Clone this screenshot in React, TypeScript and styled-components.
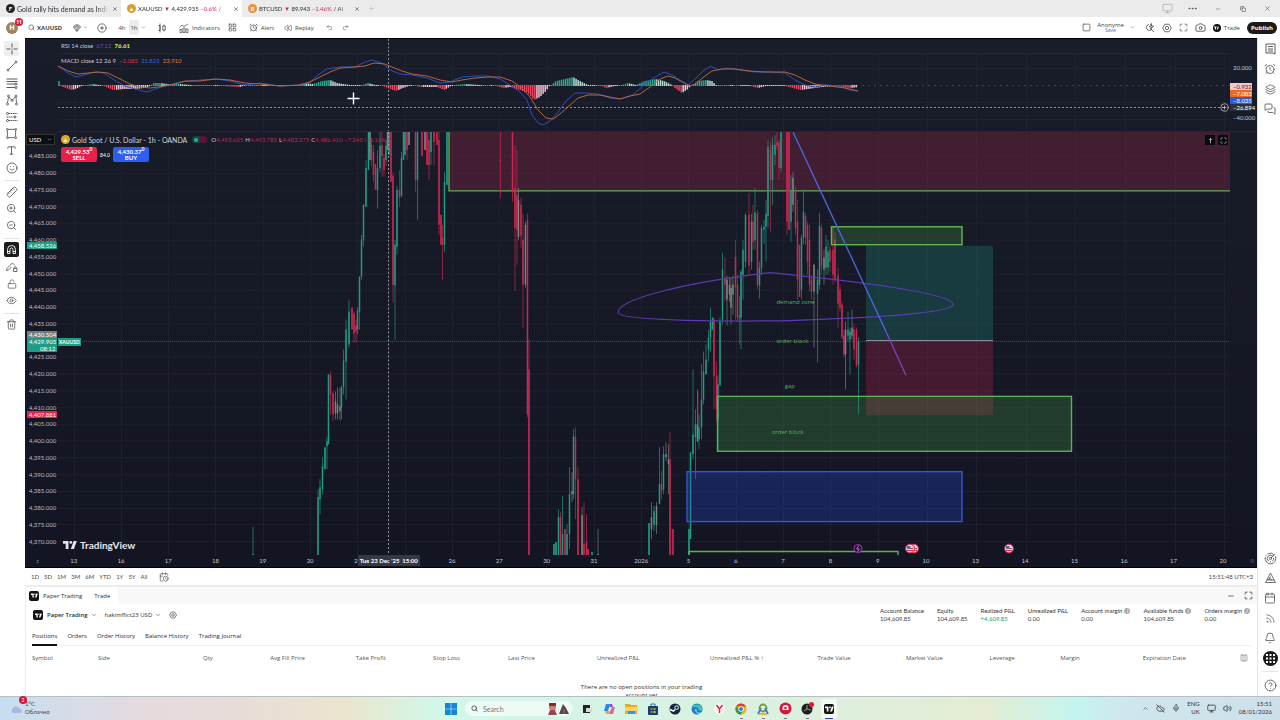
import React from 'react';
import styled, { createGlobalStyle } from 'styled-components';
import {
  AlarmClock, Bell, Calendar, Camera, ChevronDown, ChevronUp, CircleHelp, CirclePlus, CloudOff, Eye,
  Gem, LayoutGrid, Layers, LockOpen, Maximize, MessagesSquare, Mic, Minus, Monitor, Pencil,
  Radar, Redo2, Rewind, Rss, Ruler, Search, Smile, Square, Trash2, Type, Undo2, Volume2, X, ZoomIn, ZoomOut,
  CalendarClock, Columns3, Plus, Ellipsis, Copy,
} from 'lucide-react';

const GlobalStyle = createGlobalStyle`
  * { box-sizing: border-box; }
  body { margin: 0; background: #fff; font-family: Lato, "Liberation Sans", sans-serif; font-size: 6px; line-height: 8px; color: #2a2e39; }
  button, input, select { font: inherit; color: inherit; margin: 0; }
  svg { display: block; flex: none; }
`;

const UP = '#1f9c84';
const DOWN = '#cc2850';
const MIX = '#7d8580';
const WIDE_FACE = '"Open Sans", "Noto Sans", sans-serif';

/* ---------- shell ---------- */
const Shell = styled.div`
  display: flex;
  flex-direction: column;
  height: 100vh;
  overflow: hidden;
`;
const Main = styled.main`
  display: flex;
  flex: 1;
  min-height: 0;
`;
const Center = styled.div`
  display: flex;
  flex-direction: column;
  flex: 1;
  min-width: 0;
`;
const PlainButton = styled.button`
  display: flex;
  align-items: center;
  justify-content: center;
  gap: 3px;
  padding: 0;
  border: 0;
  background: none;
  white-space: nowrap;
`;
const Spacer = styled.div`
  flex: 1;
`;

/* ---------- window tabs ---------- */
const TabStrip = styled.header`
  display: flex;
  align-items: center;
  height: 17px;
  flex: none;
  background: #ebebeb;
`;
const WindowTab = styled.div<{ $active?: boolean; $large?: boolean }>`
  display: flex;
  align-items: center;
  gap: 2px;
  width: 121px;
  height: 17px;
  padding: 0 3px 0 6px;
  font-size: ${p => (p.$large ? 7 : 6)}px;
  background: ${p => (p.$active ? '#fff' : 'transparent')};
`;
const TabTitle = styled.span`
  flex: 1;
  overflow: hidden;
  white-space: nowrap;
  mask-image: linear-gradient(90deg, #000 85%, transparent);
`;
const Coin = styled.span<{ $color: string }>`
  display: flex;
  align-items: center;
  justify-content: center;
  flex: none;
  width: 9px;
  height: 9px;
  border-radius: 50%;
  background: ${p => p.$color};
  color: #fff;
  font-size: 6px;
  font-weight: 700;
`;
const Loss = styled.span`
  color: #d32e52;
`;
const WindowControls = styled.div`
  display: grid;
  grid-auto-flow: column;
  grid-auto-columns: 25px;
  align-items: center;
  justify-items: center;
  color: #555;
`;

/* ---------- toolbar ---------- */
const Toolbar = styled.nav`
  display: flex;
  align-items: center;
  height: 21px;
  flex: none;
  padding: 0 3px 0 6px;
  background: #fff;
  color: #444;
  font-family: ${WIDE_FACE};
  button { height: 15px; }
`;
const ToolGroup = styled.div<{ $gap: number; $left?: number }>`
  display: flex;
  align-items: center;
  gap: ${p => p.$gap}px;
  margin-left: ${p => p.$left ?? 0}px;
`;
const Avatar = styled.button`
  position: relative;
  width: 12px;
  border: 0;
  padding: 0;
  border-radius: 50%;
  background: #9c8465;
  color: #fff;
  font-weight: 700;
  && { height: 12px; font-size: 7px; }
`;
const Count = styled.span`
  position: absolute;
  top: -4px;
  right: -5px;
  width: 8px;
  height: 8px;
  border-radius: 4px;
  background: #d9163a;
  color: #fff;
  font-size: 5px;
  text-align: center;
`;
const Interval = styled(PlainButton)<{ $on?: boolean }>`
  width: 10px;
  border-radius: 2px;
  background: ${p => (p.$on ? '#ececec' : 'none')};
`;
const Layout = styled(PlainButton)`
  flex-direction: column;
  gap: 0;
  line-height: 6px;
  small { font-size: 5px; line-height: 5px; color: #5a5ae0; }
`;
const PublishButton = styled(PlainButton)`
  width: 30px;
  border-radius: 7px;
  background: #1b1b1b;
  color: #fff;
  font-weight: 700;
  && { height: 12px; }
`;
const Badge = styled.span`
  display: flex;
  align-items: center;
  justify-content: center;
  width: 8px;
  height: 8px;
  border-radius: 50%;
  background: #111;
  color: #fff;
`;

/* ---------- rails ---------- */
const LeftRail = styled.aside`
  display: flex;
  flex-direction: column;
  align-items: center;
  width: 25px;
  flex: none;
  padding: 3px 2px 0 0;
  color: #4a4a4a;
`;
const RailButton = styled(PlainButton)<{ $tone?: 'soft' | 'dark' }>`
  width: 15px;
  height: 15px;
  margin-bottom: 2px;
  border-radius: 2px;
  background: ${p => (p.$tone === 'dark' ? '#1c1c1c' : p.$tone === 'soft' ? '#ededed' : 'none')};
  color: ${p => (p.$tone === 'dark' ? '#fff' : 'inherit')};
`;
const RailRule = styled.hr`
  width: 16px;
  margin: 3px 0;
  border: 0;
  border-top: 1px solid #e6e6e6;
`;
const RightRail = styled.aside`
  display: flex;
  flex-direction: column;
  align-items: center;
  width: 23px;
  flex: none;
  padding: 1px 0 1px 2px;
  border-left: 1px solid #e4e4e4;
  color: #4a4a4a;
  button { width: 15px; height: 20px; }
`;
const AppsButton = styled(PlainButton)`
  && { height: 15px; margin: 3px 0 2px; }
  border-radius: 50%;
  background: #161616;
  color: #fff;
`;

/* ---------- chart ---------- */
const Chart = styled.section`
  display: grid;
  grid-template-columns: 33px 1fr 27px;
  grid-template-rows: 15px 78px 1fr 12px;
  flex: 1;
  min-height: 0;
  border-top: 1px solid #000;
  border-bottom: 1px solid #000;
  background: linear-gradient(#191c29, #131622);
  color: #c8cad2;
`;
const Pane = styled.div`
  position: relative;
  min-width: 0;
  min-height: 0;
  > svg { position: absolute; width: 100%; height: 100%; }
`;
const IndicatorPane = styled(Pane)`
  border-bottom: 1px solid #242733;
`;
const EmptyAxis = styled.div``;
const Legend = styled.div`
  position: relative;
  display: flex;
  gap: 3px;
  padding: 3px;
  white-space: nowrap;
`;
const Value = styled.span<{ $color: string; $bold?: boolean }>`
  color: ${p => p.$color};
  font-weight: ${p => (p.$bold ? 700 : 400)};
`;
const PriceAxis = styled.div`
  position: relative;
  display: flex;
  flex-direction: column;
  padding: 16px 0 5px;
  color: #b9bcc6;
`;
const PriceTick = styled.span`
  display: flex;
  flex: 1;
  align-items: center;
  padding-left: 4px;
`;
const AxisTag = styled.span<{ $top: number; $color: string }>`
  position: absolute;
  top: ${p => p.$top}%;
  left: 2px;
  width: 30px;
  padding-left: 2px;
  background: ${p => p.$color};
  color: #fff;
  line-height: 7px;
  span { display: block; padding-left: 11px; }
`;
const CurrencyBox = styled.div`
  position: absolute;
  top: 2px;
  left: 1px;
  display: flex;
  align-items: center;
  width: 29px;
  height: 11px;
  padding: 0 2px;
  border: 1px solid #333;
  background: #0c0e15;
  color: #fff;
`;
const CurrencySelect = styled.select`
  appearance: none;
  flex: 1;
  min-width: 0;
  padding: 0;
  border: 0;
  background: none;
  line-height: 8px;
`;
const SymbolTag = styled.span`
  position: absolute;
  top: 48.6%;
  left: 0;
  padding: 0 1px;
  background: ${UP};
  color: #fff;
  font-size: 5px;
  font-weight: 700;
`;
const SymbolRow = styled.div`
  position: relative;
  display: flex;
  align-items: center;
  gap: 2px;
  padding: 3px 3px 0;
  white-space: nowrap;
`;
const SymbolName = styled.span`
  margin-right: 3px;
  font-size: 7px;
  color: #d3d5dc;
`;
const Status = styled.span`
  width: 15px;
  height: 7px;
  margin-right: 2px;
  border-radius: 4px;
  background: linear-gradient(90deg, #12453f 50%, #5b1235 50%);
  &::before { content: ''; display: block; width: 4px; height: 4px; margin: 2px; border-radius: 50%; background: #1fb59a; }
`;
const OrderRow = styled.div`
  position: relative;
  display: flex;
  align-items: center;
  gap: 2px;
  padding: 3px 3px;
  color: #fff;
`;
const OrderButton = styled.button<{ $color: string }>`
  width: 36px;
  height: 15px;
  padding: 0;
  border: 0;
  border-radius: 2px;
  background: ${p => p.$color};
  color: #fff;
  font-weight: 700;
  line-height: 6px;
  sup { font-size: 5px; line-height: 0; }
`;
const Spread = styled.span`
  width: 12px;
  text-align: center;
  font-size: 5px;
`;
const Note = styled.span<{ $x: number; $y: number }>`
  position: absolute;
  left: ${p => p.$x}%;
  top: ${p => p.$y}%;
  margin-top: -4px;
  color: #58b05c;
  font-family: ${WIDE_FACE};
  white-space: nowrap;
`;
const Watermark = styled.div`
  position: absolute;
  left: 5px;
  bottom: 4px;
  display: flex;
  align-items: center;
  gap: 3px;
  color: #e4e5ea;
  font-size: 10px;
  line-height: 12px;
  font-weight: 700;
`;
const PaneButtons = styled.div`
  position: absolute;
  top: 3px;
  right: 2px;
  display: flex;
  gap: 3px;
  button { width: 10px; height: 10px; background: #08090e; color: #ddd; }
`;
const TimeAxis = styled.div`
  position: relative;
  grid-column: 1 / -1;
  display: flex;
  align-items: center;
  color: #c3c6cf;
`;
const TimeTick = styled.span<{ $grow: number }>`
  flex: ${p => p.$grow} 1 0;
  text-align: center;
`;
const AxisEnd = styled.span<{ $width: number }>`
  display: flex;
  justify-content: center;
  width: ${p => p.$width}px;
  color: #777b88;
`;
const TimeTag = styled.span`
  position: absolute;
  left: 27%;
  top: 0;
  height: 11px;
  padding: 2px;
  background: #343845;
  color: #fff;
  font-weight: 700;
  white-space: nowrap;
`;
const MacdAxis = styled.div`
  position: relative;
  display: flex;
  flex-direction: column;
  padding-top: 10px;
  border-bottom: 1px solid #242733;
`;
const MacdTick = styled.span`
  padding-left: 3px;
`;
const MacdTag = styled.span<{ $color: string; $ink?: string }>`
  width: 22px;
  padding-left: 3px;
  background: ${p => p.$color};
  color: ${p => p.$ink ?? '#fff'};
  line-height: 7px;
`;
const MacdTags = styled.div`
  display: flex;
  flex-direction: column;
  padding: 11px 0 3px;
`;
const AddAlert = styled(PlainButton)`
  position: absolute;
  right: 1px;
  top: 49px;
  color: #ccc;
`;

/* ---------- bottom area ---------- */
const RangeBar = styled.div`
  display: flex;
  align-items: center;
  gap: 5px;
  height: 17px;
  flex: none;
  padding: 0 4px 0 6px;
  color: #4d4d4d;
`;
const DateButton = styled(PlainButton)`
  margin-left: 6px;
`;
const PanelTabs = styled.div`
  display: flex;
  align-items: center;
  height: 19px;
  flex: none;
  border-top: 2px solid #ececec;
  background: #f8f8f8;
  padding-right: 4px;
  gap: 9px;
`;
const PanelTab = styled.div`
  display: flex;
  align-items: center;
  gap: 4px;
  width: 92px;
  height: 17px;
  padding-left: 3px;
  background: #fff;
  button + button { margin-left: 8px; }
`;
const LogoTile = styled.span`
  display: flex;
  align-items: center;
  justify-content: center;
  width: 10px;
  height: 10px;
  border-radius: 2px;
  background: #141414;
  color: #fff;
`;
const AccountRow = styled.div`
  display: flex;
  align-items: center;
  gap: 4px;
  height: 22px;
  flex: none;
  padding: 0 7px;
  b { font-weight: 600; }
`;
const AccountButton = styled(PlainButton)`
  margin-right: 4px;
`;
const Stats = styled.dl`
  display: flex;
  gap: 13px;
  margin: 0;
  font-family: Lato, sans-serif;
  div { white-space: nowrap; }
  dt { display: flex; align-items: center; gap: 2px; color: #333; }
  dd { margin: 0; }
`;
const Info = styled.i`
  width: 6px;
  height: 6px;
  border-radius: 50%;
  background: #aaa;
  color: #fff;
  font-size: 5px;
  line-height: 6px;
  text-align: center;
`;
const SubTabs = styled.div`
  display: flex;
  gap: 10px;
  height: 20px;
  flex: none;
  margin: 0 6px;
  border-bottom: 1px solid #eee;
`;
const SubTab = styled(PlainButton)<{ $on?: boolean }>`
  height: 20px;
  padding-top: 2px;
  border-bottom: ${p => (p.$on ? '2px solid #111' : '2px solid transparent')};
`;
const Positions = styled.table`
  width: calc(100% - 12px);
  margin: 0 6px;
  table-layout: fixed;
  border-collapse: collapse;
  th { height: 23px; padding: 0; font-weight: 400; text-align: right; color: #555; white-space: nowrap; }
  th:nth-child(-n+2) { text-align: left; }
  td { padding: 14px 0 0; text-align: center; color: #333; }
  th svg { margin: 0 3px 0 auto; }
`;
const EmptyText = styled.p`
  width: 132px;
  margin: 0 auto;
`;
const BottomPanel = styled.section`
  flex: none;
  height: 111px;
  overflow: hidden;
  border-left: 1px solid #eee;
  font-family: ${WIDE_FACE};
`;

/* ---------- taskbar ---------- */
const Taskbar = styled.footer`
  position: relative;
  display: flex;
  align-items: center;
  justify-content: center;
  height: 24px;
  flex: none;
  border-top: 1px solid #b4c0c4;
  background: linear-gradient(90deg, #c6def0 0, #d8dce6 6%, #e7dadd 12%, #e7dcd9 18%, #ebe5cd 27%, #d2f7e8 34%, #d6f3e4 48%, #deefdd 66%, #e5ecd3 77%, #c4f5ef 84%, #cfe6ee 88%, #cde0ea 100%);
`;
const Weather = styled.div`
  position: absolute;
  left: 10px;
  top: 3px;
  display: flex;
  gap: 3px;
  color: #444;
`;
const WeatherIcon = styled.span`
  position: relative;
  padding-top: 4px;
`;
const Apps = styled.div`
  display: flex;
  align-items: center;
  gap: 6px;
`;
const AppButton = styled.button<{ $open?: boolean; $on?: boolean }>`
  position: relative;
  display: flex;
  align-items: center;
  justify-content: center;
  width: 16px;
  height: 20px;
  padding: 0;
  border: 0;
  border-radius: 2px;
  background: ${p => (p.$on ? '#f3faf4' : 'none')};
  &::after {
    content: '';
    position: absolute;
    bottom: 0;
    width: ${p => (p.$on ? 8 : 3)}px;
    height: 1px;
    background: ${p => (p.$on ? '#3146b5' : p.$open ? '#778' : 'transparent')};
  }
`;
const SearchBox = styled.label`
  display: flex;
  align-items: center;
  gap: 5px;
  width: 108px;
  height: 15px;
  padding: 0 3px 0 6px;
  border-radius: 8px;
  background: #eefaf4;
  font-size: 7px;
  input { flex: 1; min-width: 0; border: 0; padding: 0; background: none; outline: none; }
`;
const Tray = styled.div`
  position: absolute;
  right: 8px;
  top: 3px;
  display: flex;
  align-items: center;
  gap: 7px;
  color: #333;
  text-align: right;
`;

/* ---------- chart data ---------- */
type Candle = [number, number, number, number, number, string];
const u = (x: number, h: number, l: number, a = h, b = l): Candle => [x, h, l, a, b, UP];
const d = (x: number, h: number, l: number, a = h, b = l): Candle => [x, h, l, a, b, DOWN];
const m = (x: number, h: number, l: number, a = h, b = l): Candle => [x, h, l, a, b, MIX];

const candles: Candle[] = [
  u(253, 528, 556, 555, 556),
  u(318, 490, 556, 498), u(320, 480, 515, 488, 500), u(322.5, 458, 495, 467, 490), u(325, 448, 470), u(327, 438, 470, 442, 447),
  u(328.5, 375, 445), d(330.5, 372, 415, 376, 395), d(333, 392, 422, 394, 415), m(335.5, 392, 420, 402, 414), m(337.5, 388, 420, 405, 414),
  m(340, 388, 421, 407, 412), u(341.5, 386, 420, 388, 408), u(343.5, 350, 395, 361, 388), u(346, 320, 400, 330, 362), u(349, 300, 348, 312, 345),
  d(352, 308, 330), d(354, 312, 343, 314, 334), d(356, 320, 343, 326, 332), u(357.5, 308, 335, 311, 330), u(359.5, 277, 330, 277, 312),
  u(361.5, 235, 280, 240, 277), u(363.5, 204, 247, 205, 240), u(366, 160, 207, 168), u(368.5, 132, 170), m(370, 132, 160), d(371.5, 138, 166, 145, 160),
  d(373.5, 145, 182, 152, 175), d(375.5, 164, 190), u(377.5, 150, 209, 168, 190), u(380, 132, 172, 146, 168), d(382, 132, 177, 145, 156), d(384, 154, 177, 158, 170),
  u(386, 140, 166, 146, 160), u(389, 132, 155), m(387.5, 132, 150), d(391, 132, 182), d(393, 172, 303, 176, 285), u(395, 240, 340, 245, 286), u(397, 186, 255, 190, 247),
  d(399.5, 170, 207, 190, 198), u(401.5, 152, 197, 158, 196), u(403.5, 132, 160), u(405, 132, 155), d(407, 132, 160, 132, 150), m(409, 132, 145),
  d(415.5, 132, 192, 132, 180), u(417.5, 132, 220, 132, 180), d(422, 132, 156), m(425, 132, 150), d(427, 132, 165), d(429, 132, 180, 140, 165), u(431, 132, 165, 132, 152),
  d(434, 132, 165, 132, 142), d(437, 132, 145), d(439, 132, 235, 140, 225), d(441, 215, 245), d(442.5, 225, 280, 238, 245), u(444.5, 172, 252, 182, 245), u(447, 132, 185),
  d(500.5, 132, 199, 160, 161), d(512.5, 132, 202, 132, 192), d(515, 145, 291, 188, 228), d(517, 150, 265, 195, 230), m(518.5, 188, 240, 200, 237), d(521, 198, 248, 205, 236),
  d(523, 214, 328, 240, 285), m(525.5, 222, 288, 225, 285), d(527.5, 214, 418, 220, 415), d(529, 340, 556, 370),
  u(554, 545, 556), u(556, 543, 556), u(558.5, 510, 556, 518), d(560.5, 513, 556, 518), u(562.5, 497, 556, 535), d(565, 530, 556), u(567, 525, 556, 535), u(569.5, 468, 550, 495, 535),
  m(572, 473, 503, 492, 495), u(573.5, 430, 500, 437, 495), d(575.5, 428, 520, 438, 480), d(578, 468, 556, 480), m(582, 508, 556, 516), d(584, 503, 556, 545), d(586.5, 515, 556, 543), d(588, 550, 556),
  u(592, 553, 556), m(598, 530, 556, 555),
  u(649, 524, 556), m(651.5, 503, 540, 518, 530), u(654, 507, 532, 512, 526), m(656.5, 503, 535, 507, 526), u(659.5, 448, 505, 485), d(661.5, 472, 500, 485, 492), u(663.5, 447, 495, 455, 490),
  m(666, 443, 462, 455, 458), m(668.5, 445, 495, 460, 465), d(670, 433, 556, 460), d(673, 530, 556),
  u(689, 530, 556), u(690.5, 453, 540), u(693, 370, 460, 435, 455), u(695.5, 410, 480, 425, 438), m(697.5, 390, 443, 425, 442), d(698, 392, 425, 424, 425), u(699, 415, 450, 428, 440), u(701.5, 365, 440, 400, 428),
  u(703.5, 352, 405, 372, 400), u(706, 345, 375, 360), u(708.5, 330, 362, 338, 350), u(710.5, 308, 352, 322, 338), u(712.5, 318, 330), d(714, 318, 410, 320, 377), d(716.5, 362, 422, 377, 410), u(718, 375, 452, 385, 420),
  u(720, 318, 386, 322), u(722.5, 253, 325, 270, 320), d(725, 258, 302, 278, 285), m(727, 276, 326, 280, 300), m(729.5, 277, 302, 285, 295), m(731, 278, 325, 288, 308), m(733, 276, 315, 285, 295),
  d(735.5, 240, 320, 257, 288), d(737.5, 275, 322, 285, 318), d(739.5, 296, 345, 316, 320), u(741, 270, 350, 272, 318), u(743, 240, 300, 250, 275), u(745.5, 213, 268, 215, 262), d(749, 193, 275, 215, 266), u(751.5, 214, 270, 222, 262),
  d(753, 205, 250, 222, 242), u(755, 188, 250, 213, 240), d(757.5, 210, 290, 213, 285), u(759.5, 262, 299, 268, 286), u(761.5, 225, 275, 228, 268), u(764, 220, 244, 227, 230), u(766, 200, 262, 214, 227), u(768, 140, 228, 147, 216),
  d(770.5, 142, 232, 150, 180), u(772.5, 138, 205, 145, 180), u(775, 135, 165, 145, 155), d(777, 132, 150, 142, 146), d(779, 140, 180, 143, 168), u(781, 132, 172, 132, 168), d(787, 132, 235, 132, 222), d(789, 132, 230),
  u(791, 175, 242, 190, 222), m(793, 172, 212, 178, 205), d(795.5, 186, 235, 192, 228), d(797.5, 200, 300, 222, 280), d(799.5, 245, 297), u(801.5, 235, 300, 238, 290), u(803.5, 190, 245, 212, 238), d(805.5, 213, 245, 216, 238),
  d(807.5, 222, 275, 225, 262), d(809.5, 225, 292, 240, 285), d(811.5, 276, 300, 280, 292), m(814, 264, 348, 265, 292), u(817.5, 270, 363, 280, 294), u(819.5, 213, 290, 226, 285), d(821.5, 224, 275, 228, 266), m(824, 250, 285, 258, 270),
  u(826, 235, 275, 247, 268), u(828, 240, 275, 252, 268), d(830, 246, 272, 250, 262), d(833, 226, 285, 250, 275), d(835, 232, 283, 240, 280), d(838, 268, 328, 276, 304), d(840, 285, 312, 290, 308), d(842, 302, 340, 305, 338),
  d(844, 330, 358, 336, 355), m(845.5, 322, 390, 330, 355), u(848, 312, 342, 330, 336), u(850, 328, 375, 332, 340), m(852, 310, 340, 328, 336), d(854, 324, 360, 330, 350), d(856.5, 328, 368, 330, 366), u(858.5, 338, 415, 342, 365),
];

const envelope: [number, number][] = [
  [59, 5], [61, 0], [63, -2], [72, -5], [78, -3], [82, 0], [92, 2], [99, 1], [104, -1], [113, -5], [125, -4], [135, -4], [145, -3], [150, -1], [153, 3], [160, 3],
  [168, 2], [180, 2], [190, 1], [215, 1], [222, -1], [240, -2], [248, 1], [262, 1], [275, -1], [290, -1], [297, 0], [303, 3], [313, 2], [322, 5], [330, 6], [337, 3],
  [350, 1], [360, 0], [368, 3], [375, 1], [383, -1], [390, -4], [396, -6], [403, -3], [412, 0], [420, -2], [437, -2], [444, -5], [451, -1], [454, 1], [465, 2],
  [480, 1], [490, 1], [497, -1], [503, -3], [510, -2], [520, -5], [528, -8], [534, -15], [540, -12], [546, -6], [550, 0], [556, 5], [565, 7], [573, 9], [580, 5],
  [588, 1], [594, 0], [600, 0], [606, -3], [615, -1], [622, 1], [628, 3], [636, 1], [645, 5], [655, 7], [664, 5], [672, 1], [675, -3], [682, -8], [688, -4], [692, 1],
  [698, 5], [706, 6], [712, 5], [716, 1], [730, 1], [738, -1], [750, -1], [758, -3], [766, -1], [785, -1], [793, -3], [800, -5], [808, -4], [822, -2], [835, -1], [850, -3], [859, -2],
];
const heightAt = (x: number) => {
  const i = Math.max(1, envelope.findIndex(p => p[0] >= x));
  const [x0, y0] = envelope[i - 1];
  const [x1, y1] = envelope[i];
  return y0 + ((y1 - y0) * (x - x0)) / (x1 - x0);
};
const bars = Array.from({ length: 388 }, (_, i) => {
  const x = 59 + i * 2.06;
  const h = heightAt(x);
  const rising = h >= heightAt(Math.max(59, x - 2));
  const color = h >= 0 ? (rising ? '#2fa58f' : '#b5ddd2') : rising ? '#f7c3cc' : '#e8475f';
  return { x, h: Math.max(1, Math.abs(h)), up: h >= 0, color };
});

const signalLine = '58,66 68,71 78,74 88,73 98,72 108,73 120,79 130,84 140,87 150,88 165,86 175,84 185,81 200,81 215,79 230,80 245,83 260,84 280,86 300,85 310,82 320,77 330,72 340,68 355,67 365,66 374,63 385,64 392,67 402,71 412,74 427,76 440,80 452,82 462,80 475,78 488,77 500,77 512,81 522,88 530,97 538,110 546,118 553,119 560,114 570,105 578,98 588,95 600,95 610,97 620,99 630,96 640,94 650,87 660,79 668,76 675,78 682,82 690,86 695,84 705,76 712,71 722,69 735,69 750,71 765,72 785,72 795,75 805,80 815,84 830,86 845,88 858,91';
const macdLine = '58,66 68,73 76,77 84,75 94,72 104,73 114,80 125,86 135,89 147,92 155,89 165,86 180,82 200,80 217,79 230,81 245,85 260,83 280,86 300,85 310,82 318,75 327,69 340,67 355,67 365,62 372,60 382,63 390,70 400,74 412,75 427,78 440,83 450,82 462,77 475,76 488,76 500,79 510,85 520,92 527,100 532,115 538,123 543,125 550,121 558,112 566,101 575,93 585,93 598,94 610,98 620,99 633,95 645,84 655,77 664,72 672,75 680,80 688,85 695,79 703,71 711,66 718,70 727,68 740,70 755,72 770,72 785,73 795,80 805,85 815,87 825,85 840,86 850,90 858,91';

const days = ['13', '16', '17', '18', '19', '20', '23', '', '26', '27', '30', '31', '2026', '5', '6', '7', '8', '9'];
const laterDays = ['10', '13', '14', '15', '16', '17'];
const gridXs = [...days.map((_, i) => 73.5 + i * 47.3), ...[0, 1, 2, 3, 4, 5, 6].map(i => 926.5 + i * 49.6)].map(v => Math.round(v) + 0.5);
const prices = Array.from({ length: 24 }, (_, i) => `4,${485 - i * 5}.000`);

const TvMark = ({ size }: { size: number }) => (
  <svg width={size} height={Math.round(size * 0.7)} viewBox="0 0 36 24" fill="currentColor" aria-hidden>
    <path d="M14 22H7V9H0V2h14zM28 22h-8l7.5-20h8z" />
    <circle cx="20" cy="5.5" r="3.6" />
  </svg>
);

const TrendIcon = () => (
  <svg width="12" height="12" viewBox="0 0 24 24" fill="none" stroke="currentColor" strokeWidth="1.6"><circle cx="4" cy="20" r="2" /><circle cx="20" cy="4" r="2" /><path d="M5.5 18.5l13-13" /></svg>
);
const FibIcon = () => (
  <svg width="12" height="12" viewBox="0 0 24 24" fill="none" stroke="currentColor" strokeWidth="1.8"><path d="M1 4h22M1 9h22M1 14h17M1 21h17" /><circle cx="20" cy="14" r="2" /><circle cx="20" cy="21" r="2" /></svg>
);
const PatternIcon = () => (
  <svg width="12" height="12" viewBox="0 0 24 24" fill="none" stroke="currentColor" strokeWidth="1.6"><circle cx="3" cy="20" r="2" /><circle cx="5" cy="4" r="2" /><circle cx="12" cy="13" r="2" /><circle cx="20" cy="4" r="2" /><circle cx="21" cy="20" r="2" /><path d="M3 18L5 6M6 6l5 6M13 12l6-7M20 6l1 12" /></svg>
);
const ForecastIcon = () => (
  <svg width="12" height="12" viewBox="0 0 24 24" fill="none" stroke="currentColor" strokeWidth="1.8"><path d="M5 5h18M1 12h14M5 19h18" strokeDasharray="3 1" /><circle cx="3" cy="5" r="2" /><circle cx="18" cy="12" r="2" /><circle cx="3" cy="19" r="2" /></svg>
);
const RectIcon = () => (
  <svg width="11" height="11" viewBox="0 0 24 24" fill="none" stroke="currentColor" strokeWidth="1.8"><path d="M5 3h14M5 21h14M3 5v14M21 5v14" /><circle cx="3" cy="3" r="2" /><circle cx="21" cy="3" r="2" /><circle cx="3" cy="21" r="2" /><circle cx="21" cy="21" r="2" /></svg>
);
const CrossIcon = () => (
  <svg width="12" height="12" viewBox="0 0 24 24" fill="none" stroke="currentColor" strokeWidth="1.8"><path d="M12 1v8M12 15v8M1 12h8M15 12h8M11 12h2" /></svg>
);
const MagnetIcon = () => (
  <svg width="11" height="11" viewBox="0 0 22 22" fill="none" stroke="currentColor" strokeWidth="1.8"><path d="M3 19v-8a8 8 0 0 1 16 0v8h-5v-8a3 3 0 0 0-6 0v8zM3 15h5M14 15h5" /></svg>
);
const PencilLockIcon = () => (
  <svg width="12" height="12" viewBox="0 0 24 24" fill="none" stroke="currentColor" strokeWidth="1.6"><path d="M2 15L13 4l4 4M2 15l-1 4 4-1 6-6M15 15h7v6h-7zM16.500 15v-2a2 2 0 0 1 4 0v2" /></svg>
);
const GearIcon = ({ size }: { size: number }) => (
  <svg width={size} height={size} viewBox="0 0 24 24" fill="none" stroke="currentColor" strokeWidth="1.8"><path d="M7 3h10l5.500 9L17 21H7L1.500 12z" strokeLinejoin="round" /><circle cx="12" cy="12" r="4" /></svg>
);
const QuickSearchIcon = () => (
  <svg width="10" height="10" viewBox="0 0 20 20" fill="none" stroke="currentColor" strokeWidth="1.6"><path d="M8 3a6 6 0 1 0 6 9M13 13l5 5M13 1l-4 7h4l-2 5 6-7h-4z" /></svg>
);
const CandleIcon = () => (
  <svg width="9" height="10" viewBox="0 0 18 20" fill="none" stroke="currentColor" strokeWidth="1.6"><path d="M1 5h3v10H1M4 1v18M12 3v3M12 14v3M9.500 6h5v8h-5z" /></svg>
);
const IndicatorIcon = () => (
  <svg width="10" height="10" viewBox="0 0 20 20" fill="none" stroke="currentColor" strokeWidth="1.4"><path d="M2 19v-6h4v6zM8 19v-9h4v9zM14 19v-7h4v7zM1 9l5-5 4 3 8-5" /></svg>
);
const ListIcon = () => (
  <svg width="11" height="12" viewBox="0 0 22 24" fill="none" stroke="currentColor" strokeWidth="1.8"><path d="M2 2h18v20l-4-2H2zM6 7h10M6 12h10M6 16h10" /></svg>
);
const PineIcon = () => (
  <svg width="13" height="12" viewBox="0 0 26 24" fill="none" stroke="currentColor" strokeWidth="1.6"><path d="M13 2l10 19H3zM13 9l-4 6 4-2 3 4M6 16h14" strokeLinejoin="round" /></svg>
);

const RsiPane = () => (
  <IndicatorPane>
    <svg viewBox="58 39 1172 15" preserveAspectRatio="none" aria-hidden>
      <path d="M388.5 39v15" stroke="#9a9ca5" strokeDasharray="2 2" />
    </svg>
    <Legend>
      <span>RSI 14 close</span>
      <Value $color="#6a4fb0">67.12</Value>
      <Value $color="#e0f060" $bold>76.61</Value>
    </Legend>
  </IndicatorPane>
);

const MacdPane = () => (
  <IndicatorPane>
    <svg viewBox="58 54 1172 77" preserveAspectRatio="none" aria-hidden>
      {gridXs.map(x => <path key={x} d={`M${x} 54v78`} stroke="#20232f" />)}
      <path d="M58 68.500h1172M58 102.500h1172M58 119.500h1172" stroke="#20232f" />
      <path d="M58 85.500h1172" stroke="#3b3e4a" strokeDasharray="2 4" />
      {bars.map(b => <rect key={b.x} x={b.x - 0.75} y={b.up ? 86 - b.h : 85} width="1.5" height={b.h} fill={b.color} />)}
      <polyline points={macdLine} fill="none" stroke="#2b50bd" />
      <polyline points={signalLine} fill="none" stroke="#b3663f" />
      <path d="M58 107.500h1166M388.500 54v78" stroke="#8d9099" strokeDasharray="2 2" />
      <path d="M353.500 92.500v12M347.500 98.500h12" stroke="#fff" strokeWidth="1.4" />
    </svg>
    <Legend>
      <span>MACD close 12 26 9</span>
      <Value $color="#e22a52">−2.085</Value>
      <Value $color="#2c62e8">21.825</Value>
      <Value $color="#f0702a">23.910</Value>
    </Legend>
    <AddAlert aria-label="Add alert"><CirclePlus size={9} /></AddAlert>
  </IndicatorPane>
);

const PricePane = () => (
  <Pane>
    <svg viewBox="58 132 1172 424" preserveAspectRatio="none" aria-hidden>
      {gridXs.map(x => <path key={x} d={`M${x} 132v424`} stroke="#1e212d" />)}
      {prices.map((p, i) => <path key={p} d={`M58 ${Math.round(156 + i * 16.79) + 0.5}h1172`} stroke="#1e212d" />)}
      <rect x="449" y="132" width="781" height="59" fill="#d62850" fillOpacity=".22" />
      <path d="M449 132v59h781" fill="none" stroke="#58ad55" strokeWidth="1.4" />
      <path d="M58 342h1172" stroke="#265853" strokeDasharray="1 1" />
      {candles.map(([x, h, l, a, b, c], i) => (
        <g key={i} fill={c}>
          <rect x={x - 0.5} y={h} width="1" height={l - h} opacity=".65" />
          <rect x={x - 0.75} y={a} width="1.5" height={b - a} />
        </g>
      ))}
      <rect x="866" y="246" width="127" height="95" fill="#1c6b63" fillOpacity=".42" />
      <rect x="866" y="341" width="127" height="75" fill="#b0204a" fillOpacity=".3" />
      <path d="M866 341h127" stroke="#8d8d95" />
      <rect x="831.500" y="227" width="130.500" height="18" fill="#4caf50" fillOpacity=".24" stroke="#65b84d" strokeWidth="1.4" />
      <rect x="717.500" y="397" width="354" height="55" fill="#4caf50" fillOpacity=".24" stroke="#5cb05a" strokeWidth="1.4" />
      <rect x="687" y="472.500" width="275" height="50" fill="#2447d8" fillOpacity=".28" stroke="#3556d0" strokeWidth="1.400" />
      <path d="M689 556v-3.500h209v3.500" fill="none" stroke="#5cb05a" strokeWidth="1.4" />
      <path d="M770 273C690 282 618 299 618 313 618 322 740 322 790 321 870 318 953 314 953 305 953 292 830 279 770 273z" fill="none" stroke="#5a3bb0" strokeWidth="1.200" />
      <path d="M793 132L886 332" stroke="#4a6be0" strokeWidth="1.300" />
      <path d="M886 332l20 44" stroke="#7a45c0" strokeWidth="1.300" />
      <path d="M388.500 132v424" stroke="#9a9ca5" strokeDasharray="2 2" />
      <circle cx="858" cy="549.500" r="4" fill="#170f22" stroke="#a536b5" />
      <path d="M859 546.500l-2.500 3.500h3l-2 3" fill="none" stroke="#c86ad8" />
      {[914, 910, 1009].map(x => (
        <g key={x}>
          <circle cx={x} cy="549.500" r="4.400" fill="#e9d5dc" stroke="#cf2a48" />
          <path d={`M${x - 3} 551.500h6M${x} 549.500h3`} stroke="#d8304c" />
          <rect x={x - 3} y="547" width="3.500" height="3" fill="#4d6cb8" />
        </g>
      ))}
    </svg>
    <SymbolRow>
      <Coin $color="#e0a92e">▲</Coin>
      <SymbolName>Gold Spot / U.S. Dollar - 1h - OANDA</SymbolName>
      <Status />
      <span>O<Value $color="#b52c50">4,493.625</Value></span>
      <span>H<Value $color="#b52c50">4,493.785</Value></span>
      <span>L<Value $color="#b52c50">4,483.275</Value></span>
      <span>C<Value $color="#b52c50">4,486.410 −7.245 (−0.16%)</Value></span>
    </SymbolRow>
    <OrderRow>
      <OrderButton $color="#e5204b">4,429.53<sup>0</sup><br />SELL</OrderButton>
      <Spread>84.0</Spread>
      <OrderButton $color="#2c5ff0">4,430.37<sup>0</sup><br />BUY</OrderButton>
    </OrderRow>
    <SymbolTag>XAUUSD</SymbolTag>
    <Note $x={61.3} $y={40.3}>demand zone</Note>
    <Note $x={61.3} $y={49.3}>order block</Note>
    <Note $x={62} $y={60.1}>gap</Note>
    <Note $x={60.9} $y={71}>order block</Note>
    <PaneButtons>
      <PlainButton aria-label="Move pane up"><svg width="7" height="7" viewBox="0 0 10 10" fill="none" stroke="currentColor"><path d="M5 9V2M2.500 4.500L5 2l2.500 2.500" /></svg></PlainButton>
      <PlainButton aria-label="Maximize pane"><Maximize size={7} /></PlainButton>
    </PaneButtons>
    <Watermark><TvMark size={14} />TradingView</Watermark>
  </Pane>
);

const ranges = ['1D', '5D', '1M', '3M', '6M', 'YTD', '1Y', '5Y', 'All'];
const columns: [string, number][] = [
  ['Symbol', 66], ['Side', 65], ['Qty', 50], ['Avg Fill Price', 92], ['Take Profit', 81], ['Stop Loss', 74], ['Last Price', 75], ['Unrealized P&L', 105],
  ['Unrealized P&L % ↑', 124], ['Trade Value', 87], ['Market Value', 92], ['Leverage', 72], ['Margin', 65], ['Expiration Date', 106],
];
const stats: [string, string, boolean?][] = [
  ['Account Balance', '104,609.85'], ['Equity', '104,609.85'], ['Realized P&L', '+4,609.85'], ['Unrealized P&L', '0.00'],
  ['Account margin', '0.00', true], ['Available funds', '104,609.85', true], ['Orders margin', '0.00', true],
];

const Trading = () => (
  <>
    <RangeBar>
      {ranges.map(r => <PlainButton key={r}>{r}</PlainButton>)}
      <DateButton aria-label="Go to date"><CalendarClock size={10} strokeWidth={1.6} /></DateButton>
      <Spacer />
      <span>15:51:48 UTC+3</span>
    </RangeBar>
    <BottomPanel>
      <PanelTabs>
        <PanelTab>
          <LogoTile><TvMark size={7} /></LogoTile>
          <PlainButton>Paper Trading</PlainButton>
          <PlainButton>Trade</PlainButton>
        </PanelTab>
        <Spacer />
        <PlainButton aria-label="Minimize panel"><Minus size={8} strokeWidth={2} /></PlainButton>
        <PlainButton aria-label="Maximize panel"><Maximize size={9} strokeWidth={2} /></PlainButton>
      </PanelTabs>
      <AccountRow>
        <LogoTile><TvMark size={7} /></LogoTile>
        <AccountButton><b>Paper Trading</b><ChevronDown size={6} /></AccountButton>
        <AccountButton>hakimflict23 USD<ChevronDown size={6} /></AccountButton>
        <PlainButton aria-label="Account settings"><GearIcon size={8} /></PlainButton>
        <Spacer />
        <Stats>
          {stats.map(([name, value, info]) => (
            <div key={name}>
              <dt>{name}{info && <Info>i</Info>}</dt>
              <dd><Value $color={value[0] === '+' ? '#1f9c6a' : '#444'}>{value}</Value></dd>
            </div>
          ))}
        </Stats>
      </AccountRow>
      <SubTabs>
        {['Positions', 'Orders', 'Order History', 'Balance History', 'Trading Journal'].map((t, i) => <SubTab key={t} $on={i === 0}>{t}</SubTab>)}
      </SubTabs>
      <Positions>
        <colgroup>
          {columns.map(([name, w]) => <col key={name} width={`${(w / 12.19).toFixed(2)}%`} />)}
          <col />
        </colgroup>
        <thead>
          <tr>
            {columns.map(([name]) => <th key={name}>{name}</th>)}
            <th><Columns3 size={8} strokeWidth={2} color="#888" /></th>
          </tr>
        </thead>
        <tbody>
          <tr><td colSpan={15}><EmptyText>There are no open positions in your trading account yet</EmptyText></td></tr>
        </tbody>
      </Positions>
    </BottomPanel>
  </>
);

const TaskApps = () => (
  <Apps>
    <AppButton aria-label="Start"><svg width="12" height="12" viewBox="0 0 12 12" fill="#1486d8"><path d="M0 0h5.700v5.700H0zM6.300 0H12v5.700H6.300zM0 6.300h5.700V12H0zM6.300 6.300H12V12H6.300z" /></svg></AppButton>
    <SearchBox>
      <Search size={7} strokeWidth={2.500} />
      <input placeholder="Search" aria-label="Search" />
      <svg width="22" height="13" viewBox="0 0 22 13"><rect x="1" y="1" width="7" height="7" rx="2" fill="#c98272" /><path d="M1 4V1h7v3z" fill="#7c2e35" /><path d="M0 13l2-5h5l2 5z" fill="#9a4655" /><path d="M11 12l4-10 3 4 3 6z" fill="#4b4a52" /><path d="M15 12V7h2v5z" fill="#a8474a" /></svg>
    </SearchBox>
    <AppButton aria-label="Desktops"><svg width="11" height="10" viewBox="0 0 11 10"><rect x="1" y="1" width="7" height="8" fill="#222" /><rect x="4" y="4" width="6" height="4" fill="#d7d7d7" /></svg></AppButton>
    <AppButton aria-label="Copilot"><svg width="12" height="12" viewBox="0 0 12 12"><path d="M3 1h4L5 8H1z" fill="#2f86e5" /><path d="M7 1h2l1 3H6z" fill="#8a50d8" /><path d="M9 4h3l-2 7H6z" fill="#e5609a" /><path d="M2 8h5l-1 3H3z" fill="#f2a33c" /></svg></AppButton>
    <AppButton aria-label="Explorer"><svg width="13" height="11" viewBox="0 0 13 11"><path d="M0 1h5l1 1h6v9H0z" fill="#e8a92a" /><path d="M0 4h13v4H0z" fill="#fbd35e" /><path d="M3 8h7v3H3z" fill="#3e92d8" /></svg></AppButton>
    <AppButton aria-label="Store"><svg width="12" height="12" viewBox="0 0 12 12"><path d="M4 3V1h4v2" fill="none" stroke="#2b72b8" /><rect x="1" y="3" width="10" height="9" rx="1" fill="#1b3f63" /><path d="M3.500 5h2v2h-2z" fill="#e5604a" /><path d="M6.500 5h2v2h-2z" fill="#7ac043" /><path d="M3.500 8h2v2h-2z" fill="#3aa0e8" /><path d="M6.500 8h2v2h-2z" fill="#f2c33c" /></svg></AppButton>
    <AppButton aria-label="Steam"><svg width="12" height="12" viewBox="0 0 12 12"><circle cx="6" cy="6" r="5.500" fill="#16263c" /><circle cx="7.600" cy="4.600" r="1.800" fill="none" stroke="#fff" /><path d="M1 6.500l3.500 1.500L6 6.500" stroke="#fff" strokeWidth="1.500" fill="none" /></svg></AppButton>
    <AppButton aria-label="Edge"><svg width="12" height="12" viewBox="0 0 12 12"><circle cx="6" cy="6" r="5.500" fill="#1b7fcb" /><path d="M1 5a5.500 5.500 0 0 1 10.500 1c0 2-3 2-4 1 .5-3-4-4-6.500-2z" fill="#40c7a5" /><path d="M5 6c-1 3 2 5 5 4" stroke="#d8f4ff" fill="none" /></svg></AppButton>
    <AppButton aria-label="Yandex"><svg width="11" height="11" viewBox="0 0 11 11"><circle cx="5.500" cy="5.500" r="5.500" fill="#fdf6f4" /><path d="M2.500 2l3 4 3-4M5.500 6v4" stroke="#e0262c" strokeWidth="1.400" fill="none" /></svg></AppButton>
    <AppButton aria-label="Chrome" $open><svg width="12" height="12" viewBox="0 0 12 12"><circle cx="6" cy="6" r="5.600" fill="#e2b52c" /><path d="M1 3.500A5.600 5.600 0 0 1 11 3.500H6z" fill="#d9412f" /><path d="M1 3.500A5.600 5.600 0 0 0 6 11.600L7.500 8z" fill="#2f9a4c" /><circle cx="6" cy="6" r="2.700" fill="#fff" /><circle cx="6" cy="6" r="2" fill="#3b78e0" /></svg></AppButton>
    <AppButton aria-label="Drive" $open><svg width="12" height="12" viewBox="0 0 12 12"><circle cx="6" cy="5" r="3.500" fill="none" stroke="#7a9a3a" strokeWidth="1.800" /><path d="M1 11L4 5M11 11L8 5" stroke="#3f7dc8" strokeWidth="1.800" /><path d="M2 11h8" stroke="#e0b63c" strokeWidth="2" /></svg></AppButton>
    <AppButton aria-label="Recorder" $open><svg width="13" height="13" viewBox="0 0 13 13"><circle cx="6.500" cy="6.500" r="6" fill="#d4163c" /><path d="M3.500 8V6a3 3 0 0 1 6 0v2z" fill="#fff" /><circle cx="6.500" cy="6" r="1.300" fill="#d4163c" /></svg></AppButton>
    <AppButton aria-label="OBS" $open><svg width="13" height="13" viewBox="0 0 13 13"><circle cx="6" cy="7" r="5.500" fill="#1d1d1f" /><path d="M6 3v4l-3 2M6 7l4 1" stroke="#999" fill="none" /><circle cx="10.500" cy="2.700" r="2.600" fill="#e01b32" /></svg></AppButton>
    <AppButton aria-label="TradingView" $on><LogoTile><TvMark size={9} /></LogoTile></AppButton>
  </Apps>
);

export default function App() {
  return (
    <Shell>
      <GlobalStyle />
      <TabStrip>
        <WindowTab $large><Coin $color="#222">F</Coin><TabTitle>Gold rally hits demand as Indi</TabTitle><X size={6} /></WindowTab>
        <WindowTab $active><Coin $color="#d9a02c">▲</Coin><TabTitle>XAUUSD <Loss>▼</Loss> 4,429.935 <Loss>−0.6%</Loss> /</TabTitle><X size={6} /></WindowTab>
        <WindowTab><Coin $color="#e8913a">B</Coin><TabTitle>BTCUSD <Loss>▼</Loss> 89,943 <Loss>−1.46%</Loss> / AI</TabTitle><X size={6} /></WindowTab>
        <ToolGroup $gap={0} $left={5}><Plus size={7} color="#bbb" /></ToolGroup>
        <Spacer />
        <WindowControls>
          <Monitor size={11} strokeWidth={1.200} color="#999" />
          <Ellipsis size={11} strokeWidth={2} />
          <Minus size={6} strokeWidth={2} />
          <Copy size={6} strokeWidth={2.500} />
          <X size={7} strokeWidth={2} />
        </WindowControls>
      </TabStrip>
      <Toolbar>
        <Avatar aria-label="Account">H<Count>11</Count></Avatar>
        <ToolGroup $gap={2} $left={10}><Search size={7} strokeWidth={2} /><PlainButton><b>XAUUSD</b></PlainButton></ToolGroup>
        <ToolGroup $gap={2} $left={11}><Gem size={8} strokeWidth={1.800} /><ChevronDown size={5} /></ToolGroup>
        <ToolGroup $gap={0} $left={9}><CirclePlus size={10} strokeWidth={1.800} /></ToolGroup>
        <ToolGroup $gap={2} $left={10}><Interval>4h</Interval><Interval $on>1h</Interval><ChevronDown size={5} /></ToolGroup>
        <ToolGroup $gap={0} $left={12}><CandleIcon /></ToolGroup>
        <ToolGroup $gap={0} $left={12}><PlainButton><IndicatorIcon />Indicators</PlainButton></ToolGroup>
        <ToolGroup $gap={0} $left={8}><LayoutGrid size={9} strokeWidth={1.800} /></ToolGroup>
        <ToolGroup $gap={10} $left={12}>
          <PlainButton><AlarmClock size={9} strokeWidth={1.800} />Alert</PlainButton>
          <PlainButton><Rewind size={8} strokeWidth={1.800} />Replay</PlainButton>
        </ToolGroup>
        <ToolGroup $gap={9} $left={12}>
          <Undo2 size={7} strokeWidth={1.600} />
          <Redo2 size={7} strokeWidth={1.600} />
        </ToolGroup>
        <Spacer />
        <ToolGroup $gap={6}>
          <Square size={9} strokeWidth={1.800} />
          <Layout>Anonyme<small>Save</small></Layout>
          <ChevronDown size={5} />
        </ToolGroup>
        <ToolGroup $gap={7} $left={10}>
          <QuickSearchIcon />
          <GearIcon size={10} />
          <Maximize size={9} strokeWidth={1.800} />
          <Camera size={11} strokeWidth={1.800} />
          <PlainButton><Badge><TvMark size={5} /></Badge>Trade</PlainButton>
          <PublishButton>Publish</PublishButton>
        </ToolGroup>
      </Toolbar>
      <Main>
        <LeftRail>
          <RailButton $tone="soft" aria-label="Cross"><CrossIcon /></RailButton>
          <RailButton aria-label="Trend line"><TrendIcon /></RailButton>
          <RailButton aria-label="Fibonacci"><FibIcon /></RailButton>
          <RailButton aria-label="Patterns"><PatternIcon /></RailButton>
          <RailButton aria-label="Forecast"><ForecastIcon /></RailButton>
          <RailButton aria-label="Shapes"><RectIcon /></RailButton>
          <RailButton aria-label="Text"><Type size={11} strokeWidth={1.800} /></RailButton>
          <RailButton aria-label="Emoji"><Smile size={12} strokeWidth={1.600} /></RailButton>
          <RailRule />
          <RailButton aria-label="Measure"><Ruler size={12} strokeWidth={1.600} transform="scale(-1 1)" /></RailButton>
          <RailButton aria-label="Zoom in"><ZoomIn size={11} strokeWidth={1.600} /></RailButton>
          <RailButton aria-label="Zoom out"><ZoomOut size={11} strokeWidth={1.600} /></RailButton>
          <RailRule />
          <RailButton $tone="dark" aria-label="Magnet"><MagnetIcon /></RailButton>
          <RailButton aria-label="Keep drawing"><PencilLockIcon /></RailButton>
          <RailButton aria-label="Lock"><LockOpen size={10} strokeWidth={1.600} /></RailButton>
          <RailButton aria-label="Hide"><Eye size={11} strokeWidth={1.600} /></RailButton>
          <RailRule />
          <RailButton aria-label="Remove"><Trash2 size={11} strokeWidth={1.600} /></RailButton>
        </LeftRail>
        <Center>
          <Chart>
            <EmptyAxis /><RsiPane /><EmptyAxis />
            <EmptyAxis /><MacdPane />
            <MacdAxis>
              <MacdTick>20.000</MacdTick>
              <MacdTags>
                <MacdTag $color="#f6c6cd" $ink="#5a2430">−0.932</MacdTag>
                <MacdTag $color="#e96a1f">−7.083</MacdTag>
                <MacdTag $color="#2c5be0">−8.035</MacdTag>
                <MacdTag $color="#2e313d">−26.894</MacdTag>
              </MacdTags>
              <MacdTick>−40.000</MacdTick>
            </MacdAxis>
            <PriceAxis>
              {prices.map(p => <PriceTick key={p}>{p}</PriceTick>)}
              <CurrencyBox>
                <CurrencySelect aria-label="Currency"><option>USD</option></CurrencySelect>
                <ChevronDown size={5} />
              </CurrencyBox>
              <AxisTag $top={26} $color={UP}>4,458.526</AxisTag>
              <AxisTag $top={47} $color="#777b80">4,430.504</AxisTag>
              <AxisTag $top={48.600} $color={UP}>4,429.905<span>08:12</span></AxisTag>
              <AxisTag $top={66} $color="#e5204b">4,407.881</AxisTag>
            </PriceAxis>
            <PricePane />
            <EmptyAxis />
            <TimeAxis>
              <AxisEnd $width={25}>z</AxisEnd>
              {days.map((t, i) => <TimeTick key={i} $grow={473}>{t}</TimeTick>)}
              {laterDays.map(t => <TimeTick key={`next-${t}`} $grow={495}>{t}</TimeTick>)}
              <TimeTick $grow={495}>20</TimeTick>
              <AxisEnd $width={9}>○</AxisEnd>
              <TimeTag>Tue 23 Dec '25&nbsp; 15:00</TimeTag>
            </TimeAxis>
          </Chart>
          <Trading />
        </Center>
        <RightRail>
          <PlainButton aria-label="Watchlist"><ListIcon /></PlainButton>
          <PlainButton aria-label="Alerts"><AlarmClock size={12} strokeWidth={1.600} /></PlainButton>
          <PlainButton aria-label="Layers"><Layers size={11} strokeWidth={1.600} /></PlainButton>
          <PlainButton aria-label="Chats"><MessagesSquare size={12} strokeWidth={1.600} /></PlainButton>
          <Spacer />
          <PlainButton aria-label="Screener"><Radar size={13} strokeWidth={1.500} /></PlainButton>
          <PlainButton aria-label="Pine"><PineIcon /></PlainButton>
          <PlainButton aria-label="Calendar"><Calendar size={12} strokeWidth={1.500} /></PlainButton>
          <PlainButton aria-label="News"><Rss size={11} strokeWidth={1.500} /></PlainButton>
          <PlainButton aria-label="Notifications"><Bell size={12} strokeWidth={1.500} /></PlainButton>
          <AppsButton aria-label="Products"><svg width="9" height="9" viewBox="0 0 9 9" fill="currentColor">{[0, 3.5, 7].map(y => [0, 3.5, 7].map(x => <rect key={`${x}${y}`} x={x} y={y} width="2" height="2" />))}</svg></AppsButton>
          <RailRule />
          <PlainButton aria-label="Help"><CircleHelp size={13} strokeWidth={1.500} /></PlainButton>
        </RightRail>
      </Main>
      <Taskbar>
        <Weather>
          <WeatherIcon><svg width="12" height="9" viewBox="0 0 12 9"><path d="M3 9a3 3 0 0 1 0-5 4 4 0 0 1 7 1 2 2 0 0 1 0 4z" fill="#a9b8e0" /></svg><Count>2</Count></WeatherIcon>
          <div>1°C<br />Облачно</div>
        </Weather>
        <TaskApps />
        <Tray>
          <ChevronUp size={7} />
          <CloudOff size={9} />
          <Mic size={8} />
          <div>ENG<br />UK</div>
          <Monitor size={9} />
          <Volume2 size={9} />
          <div>15:51<br />08/01/2026</div>
        </Tray>
      </Taskbar>
    </Shell>
  );
}
